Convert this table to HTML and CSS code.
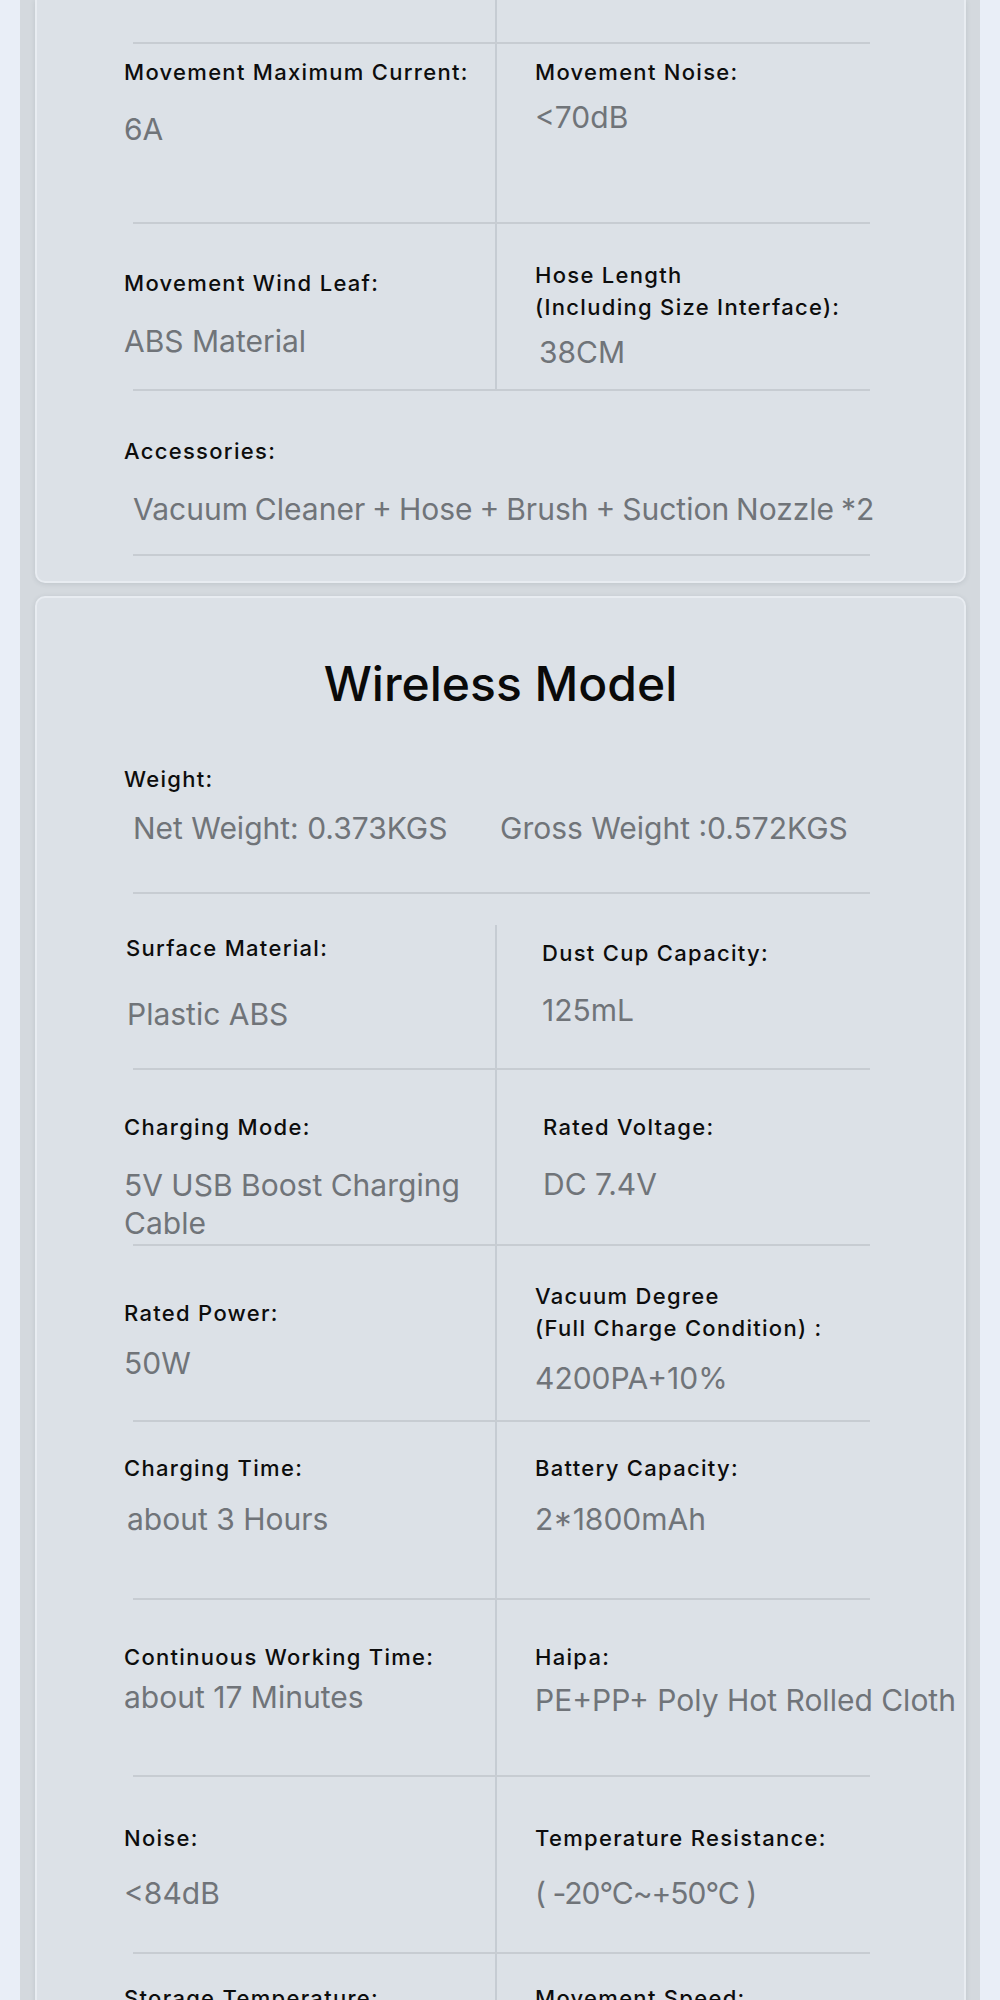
FILE: index.html
```html
<!DOCTYPE html>
<html lang="en">
<head>
<meta charset="utf-8">
<title>Specifications</title>
<link rel="stylesheet" href="styles.css">
</head>
<body>
<div class="page">
  <section class="card card-cut">
    <div class="row split h-42"><div class="cell"></div><div class="cell"></div></div>
    <div class="rule"></div>
    <div class="row split h-178">
      <div class="cell pt-12"><div class="label">Movement Maximum Current:</div><div class="value g-22">6A</div></div>
      <div class="cell pt-12"><div class="label">Movement Noise:</div><div class="value g-10">&lt;70dB</div></div>
    </div>
    <div class="rule"></div>
    <div class="row split h-165">
      <div class="cell pt-43"><div class="label">Movement Wind Leaf:</div><div class="value g-23">ABS Material</div></div>
      <div class="cell pt-35"><div class="label">Hose Length<br>(Including Size Interface):</div><div class="value g-10 ix-4">38CM</div></div>
    </div>
    <div class="rule"></div>
    <div class="row full h-163 pt-44">
      <div class="label">Accessories:</div>
      <div class="value g-23 ix-9 tight-words">Vacuum Cleaner + Hose + Brush + Suction Nozzle *2</div>
    </div>
    <div class="rule"></div>
  </section>

  <section class="card card-open">
    <h2 class="title">Wireless Model</h2>
    <div class="weight">
      <div class="label">Weight:</div>
      <div class="weight-values g-14">
        <span class="value">Net Weight: 0.373KGS</span>
        <span class="value">Gross Weight :0.572KGS</span>
      </div>
    </div>
    <div class="rule"></div>
    <div class="row split h-174 pad-div">
      <div class="cell pt-7"><div class="label ix-2">Surface Material:</div><div class="value g-31 ix-3">Plastic ABS</div></div>
      <div class="cell pt-12"><div class="label ix-7">Dust Cup Capacity:</div><div class="value g-22 ix-7">125mL</div></div>
    </div>
    <div class="rule"></div>
    <div class="row split h-174">
      <div class="cell pt-41"><div class="label">Charging Mode:</div><div class="value g-23">5V USB Boost Charging Cable</div></div>
      <div class="cell pt-41"><div class="label ix-8">Rated Voltage:</div><div class="value g-22 ix-8">DC 7.4V</div></div>
    </div>
    <div class="rule"></div>
    <div class="row split h-174">
      <div class="cell pt-51"><div class="label">Rated Power:</div><div class="value g-15">50W</div></div>
      <div class="cell pt-34"><div class="label">Vacuum Degree<br>(Full Charge Condition) :</div><div class="value g-15">4200PA+10%</div></div>
    </div>
    <div class="rule"></div>
    <div class="row split h-176">
      <div class="cell pt-30"><div class="label">Charging Time:</div><div class="value g-16 ix-3">about 3 Hours</div></div>
      <div class="cell pt-30"><div class="label">Battery Capacity:</div><div class="value g-16">2*1800mAh</div></div>
    </div>
    <div class="rule"></div>
    <div class="row split h-175">
      <div class="cell pt-41"><div class="label">Continuous Working Time:</div><div class="value g-5">about 17 Minutes</div></div>
      <div class="cell pt-41"><div class="label">Haipa:</div><div class="value g-8 nowrap">PE+PP+ Poly Hot Rolled Cloth</div></div>
    </div>
    <div class="rule"></div>
    <div class="row split h-175">
      <div class="cell pt-45"><div class="label">Noise:</div><div class="value g-20">&lt;84dB</div></div>
      <div class="cell pt-45"><div class="label">Temperature Resistance:</div><div class="value g-20 tight-letters">( -20°C~+50°C )</div></div>
    </div>
    <div class="rule"></div>
    <div class="row split h-175">
      <div class="cell pt-28"><div class="label">Storage Temperature:</div></div>
      <div class="cell pt-28"><div class="label">Movement Speed:</div></div>
    </div>
  </section>
</div>
</body>
</html>
```

FILE: styles.css
```css
* { box-sizing: border-box; }

body {
  margin: 0;
  background: #e9eef7;
  font-family: Inter, "Noto Sans", sans-serif;
}

.page {
  margin: 0 20px;
  padding: 0 14px 0 15px;
  background: #d4d9de;
  display: flex;
  flex-direction: column;
  gap: 13px;
  min-height: 2000px;
}

.card {
  background: #dce1e7;
  border: 2px solid #e8ecf1;
  border-radius: 10px;
  box-shadow: 0 1px 5px rgba(60, 70, 85, 0.14);
}

.card-cut {
  border-top: 0;
  border-top-left-radius: 0;
  border-top-right-radius: 0;
  padding-bottom: 25px;
}

.card-open {
  padding-top: 57px;
  flex: 1;
}

.title {
  margin: 0;
  font-size: 48px;
  line-height: 58px;
  font-weight: 500;
  text-align: center;
  color: #0a0a0a;
}

.weight { margin-top: 50px; padding-bottom: 45px; }
.weight > .label { padding-left: 87px; }
.weight-values { display: grid; grid-template-columns: 460px 1fr; }
.weight-values > .value:first-child { padding-left: 96px; }
.weight-values > .value:last-child { padding-left: 3px; }

.row { display: grid; }
.split { grid-template-columns: 460px 1fr; }
.split > .cell:first-child { border-right: 2px solid #c6ccd3; padding-left: 87px; }
.split > .cell:last-child { padding-left: 38px; }
.full { display: block; padding-left: 87px; }
.pad-div { padding-top: 31px; }

.label {
  font-size: 22px;
  line-height: 32px;
  font-weight: 500;
  color: #0d0d0d;
  letter-spacing: 1.3px;
}

.value {
  display: block;
  font-size: 30px;
  line-height: 38px;
  font-weight: 400;
  color: #707479;
}

.nowrap { white-space: nowrap; }
.tight-words { word-spacing: -1.5px; }
.tight-letters { letter-spacing: -1px; }

.rule {
  height: 2px;
  width: 737px;
  margin-left: 96px;
  background: #c7ccd2;
}

.h-42 { height: 42px; }
.h-163 { height: 163px; }
.h-165 { height: 165px; }
.h-174 { height: 174px; }
.h-175 { height: 175px; }
.h-176 { height: 176px; }
.h-178 { height: 178px; }

.pt-7 { padding-top: 7px; }
.pt-12 { padding-top: 12px; }
.pt-28 { padding-top: 28px; }
.pt-30 { padding-top: 30px; }
.pt-34 { padding-top: 34px; }
.pt-35 { padding-top: 35px; }
.pt-41 { padding-top: 41px; }
.pt-43 { padding-top: 43px; }
.pt-44 { padding-top: 44px; }
.pt-45 { padding-top: 45px; }
.pt-51 { padding-top: 51px; }

.g-5 { margin-top: 5px; }
.g-8 { margin-top: 8px; }
.g-10 { margin-top: 10px; }
.g-14 { margin-top: 14px; }
.g-15 { margin-top: 15px; }
.g-16 { margin-top: 16px; }
.g-20 { margin-top: 20px; }
.g-22 { margin-top: 22px; }
.g-23 { margin-top: 23px; }
.g-31 { margin-top: 31px; }

.ix-2 { padding-left: 2px; }
.ix-3 { padding-left: 3px; }
.ix-4 { padding-left: 4px; }
.ix-7 { padding-left: 7px; }
.ix-8 { padding-left: 8px; }
.ix-9 { padding-left: 9px; }
```
